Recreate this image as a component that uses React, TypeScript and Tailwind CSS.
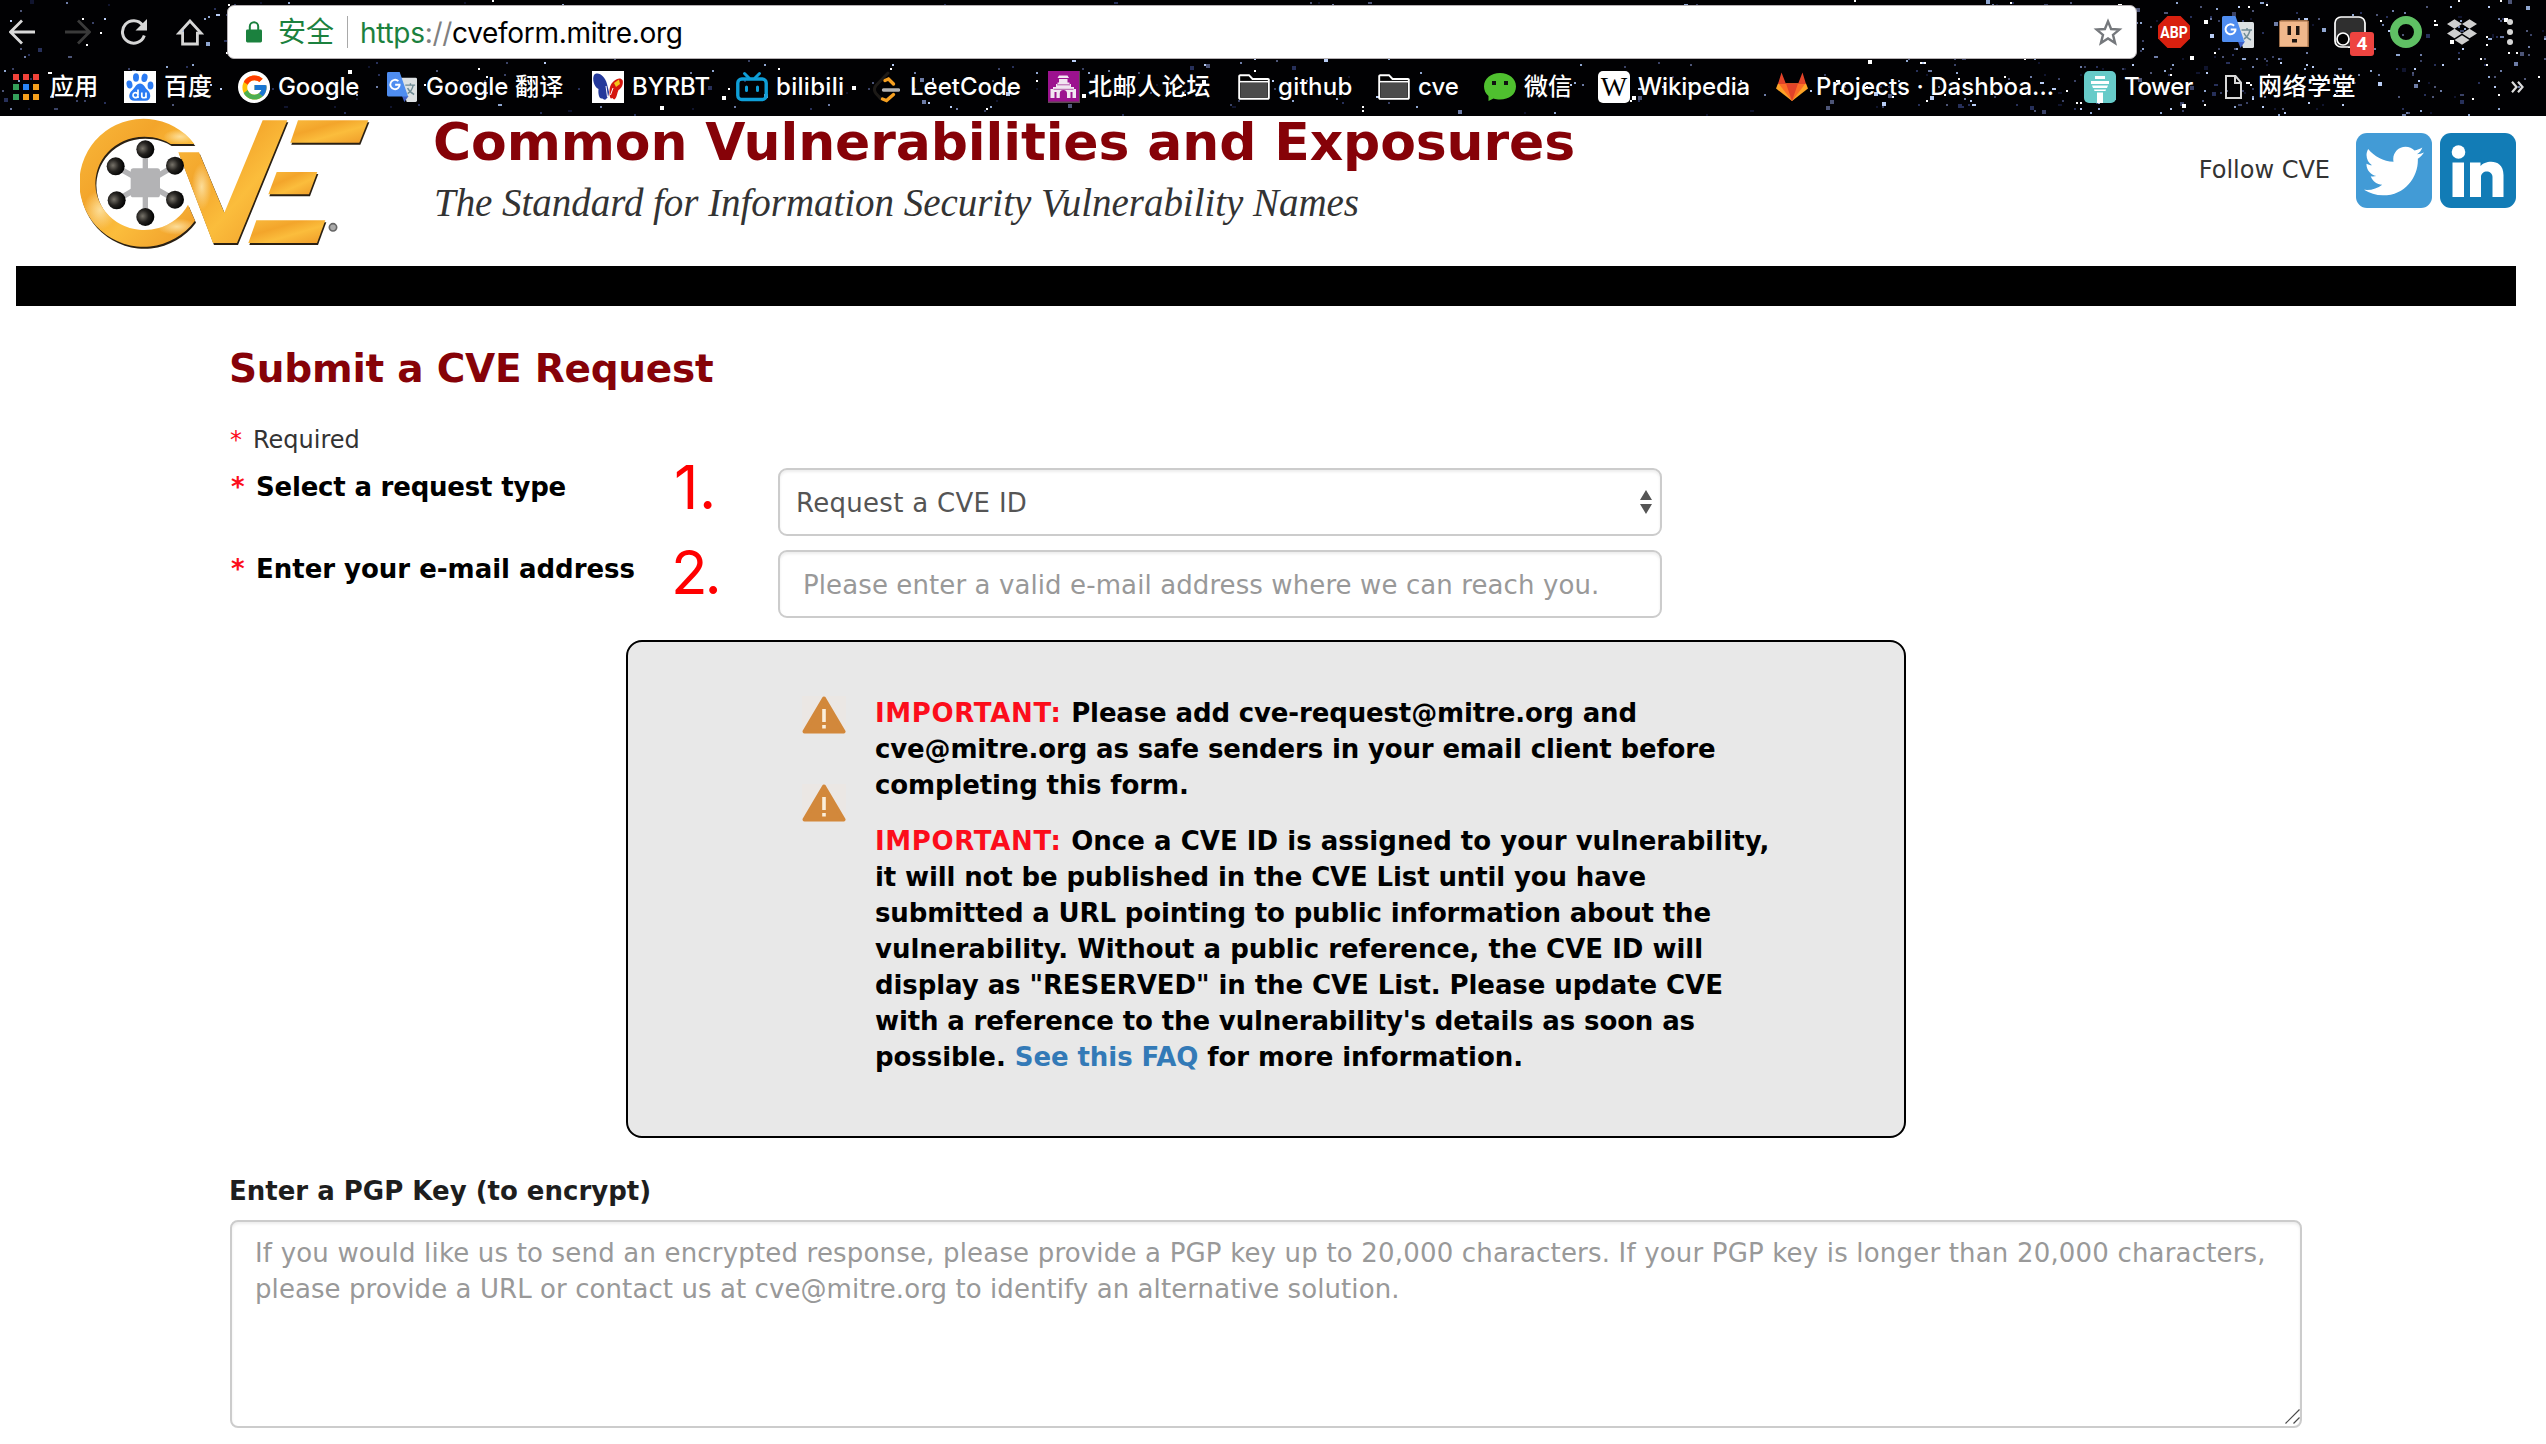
import type { ReactNode } from "react";
import { FcGoogle } from "react-icons/fc";
import { FaTwitter } from "react-icons/fa";
import { SiDropbox } from "react-icons/si";

/* ---------- starry toolbar theme ---------- */

const STAR_COLORS = ["#27305a", "#4d5577", "#6d7ca6", "#8fa6d0", "#b9cdf5", "#ffffff", "#10142e", "#3a4266"];

function makeStars() {
  let seed = 20177;
  const rnd = () => {
    seed = (seed * 1103515245 + 12345) % 2147483648;
    return seed / 2147483648;
  };
  const stars: { x: number; y: number; w: number; h: number; c: string }[] = [];
  for (let i = 0; i < 780; i++) {
    const x = i < 520 ? rnd() * 2546 : 1880 + rnd() * 666;
    const big = rnd() > 0.82;
    stars.push({
      x: Math.round(x / 2) * 2,
      y: Math.round((rnd() * 114) / 2) * 2,
      w: big ? 4 : 2,
      h: big && rnd() > 0.4 ? 4 : 2,
      c: STAR_COLORS[Math.floor(rnd() * STAR_COLORS.length)],
    });
  }
  return stars;
}
const STARS = makeStars();

function StarField() {
  return (
    <svg className="absolute inset-0" width="2546" height="116" shapeRendering="crispEdges" aria-hidden>
      {STARS.map((s, i) => (
        <rect key={i} x={s.x} y={s.y} width={s.w} height={s.h} fill={s.c} />
      ))}
    </svg>
  );
}

/* ---------- browser icons ---------- */

function Arrow({ className, flip }: { className: string; flip?: boolean }) {
  return (
    <svg className={className} width="26" height="26" viewBox="0 0 26 26" fill="none" stroke="currentColor" strokeWidth="2.8">
      {flip ? <path d="M0 13H24M13 1.5L24.5 13L13 24.5" /> : <path d="M26 13H2M13 1.5L1.5 13L13 24.5" />}
    </svg>
  );
}

function Reload() {
  return (
    <svg width="28" height="26" viewBox="0 0 28 26" fill="none" className="text-[#d6d6d6]">
      <path d="M22.6 6.2A11.2 11.2 0 1 0 24.3 16.5" stroke="currentColor" strokeWidth="3" />
      <path d="M27 0V11.5H15.5Z" fill="currentColor" />
    </svg>
  );
}

function Home() {
  return (
    <svg width="28" height="27" viewBox="0 0 28 27" fill="none" stroke="#d6d6d6" strokeWidth="2.8">
      <path d="M14 2L2.8 14.2H6.6V25H21.4V14.2H25.2Z" />
    </svg>
  );
}

function Lock() {
  return (
    <svg width="16" height="22" viewBox="0 0 16 22">
      <path d="M3.8 10V5.4a4.2 4.2 0 0 1 8.4 0V10" fill="none" stroke="#1b813e" strokeWidth="2" />
      <rect x="0" y="8.5" width="16" height="13" rx="1.4" fill="#1b813e" />
    </svg>
  );
}

function StarOutline() {
  return (
    <svg width="30" height="28" viewBox="0 0 30 28" fill="none" stroke="#75787c" strokeWidth="2.4">
      <path d="M15 3.4L18.1 11L26.4 11.6L20 16.9L22.1 25L15 20.5L7.9 25L10 16.9L3.6 11.6L11.9 11Z" />
    </svg>
  );
}

function TranslateIcon({ size }: { size: number }) {
  return (
    <svg width={size} height="32" viewBox="0 0 32 32">
      <path d="M13 6H30.5A1.5 1.5 0 0 1 32 7.500V30.500A1.500 1.500 0 0 1 30.500 32H21Z" fill="#dde1e3" />
      <path d="M16 25.500H23L18.500 32Z" fill="#3f5fc4" />
      <path d="M1.500 0H13.500L22.500 26H1.500A1.500 1.500 0 0 1 0 24.500V1.500A1.500 1.500 0 0 1 1.500 0Z" fill="#4f8df0" />
      <path d="M14 11.600A5 5 0 1 1 12.600 8.800M14 12.600H9.200" fill="none" stroke="#fff" strokeWidth="2" transform="translate(-.5 1)" />
      <path d="M19.500 14H30M25 12V14M28 14C27 18.500 24.500 21.500 22 23M22 17C23.500 20.500 26 22.500 29 24" fill="none" stroke="#6f8b95" strokeWidth="1.500" />
    </svg>
  );
}

function AppsIcon() {
  const colors = ["#f0433a", "#f0433a", "#f0433a", "#34a05a", "#2a84f5", "#f5a01d", "#34a05a", "#f5a01d", "#f5a01d"];
  return (
    <div className="grid grid-cols-3 gap-x-1 gap-y-1">
      {colors.map((c, i) => (
        <svg key={i} width="6" height="6">
          <rect width="6" height="6" fill={c} />
        </svg>
      ))}
    </div>
  );
}

function BaiduIcon() {
  return (
    <svg width="32" height="32" viewBox="0 0 32 32">
      <rect width="32" height="32" fill="#fff" />
      <g fill="#2b7bf3">
        <ellipse cx="12" cy="6.500" rx="3" ry="4.200" />
        <ellipse cx="20.500" cy="6.800" rx="3" ry="4.200" transform="rotate(12 20.500 6.800)" />
        <ellipse cx="5.500" cy="13.500" rx="2.900" ry="4" transform="rotate(-14 5.500 13.500)" />
        <ellipse cx="26.500" cy="14.500" rx="2.900" ry="4" />
        <path d="M16 12.500C20 12.500 20.500 16.500 23.500 19C27.500 22.500 27.500 29.500 21.500 29.800C18 30 14 29.400 11 29.800C4.500 30.200 3.500 23.500 8 19.500C11 17 12 12.500 16 12.500Z" />
      </g>
      <path d="M14 18.500V27M14 24.300A2.500 2.500 0 1 1 14 24.100M17.800 21.500V25C17.800 27.300 22 27.300 22 25V21.500V27.200" fill="none" stroke="#fff" strokeWidth="1.700" />
    </svg>
  );
}

function GoogleIcon() {
  return (
    <div className="flex size-8 items-center justify-center rounded-full bg-white">
      <FcGoogle size={29} />
    </div>
  );
}

function ByrbtIcon() {
  return (
    <svg width="32" height="32" viewBox="0 0 32 32">
      <rect width="32" height="32" fill="#fff" />
      <path d="M2 4C6 0 13 5 15 13L17 21C17 24 16 27 13.500 28.500C12 29.500 11 27 10 27.500C7 28 6 23 6.500 18C2 16 0 8 2 4Z" fill="#24399b" />
      <path d="M18 16C20 9 28 5 30.500 9C32 13 29 18 26.500 19C25 22 25 26 23 28C21 29.500 21 26 19.500 27.500C17.500 28.500 17 20 18 16Z" fill="#d5160f" />
      <path d="M22 12L27 8.500L28 13L24 16Z" fill="#f2c21b" />
      <path d="M14 15L15.500 26M21 17L18.500 24" stroke="#fff" strokeWidth="1" />
    </svg>
  );
}

function BilibiliIcon() {
  return (
    <svg width="32" height="32" viewBox="0 0 32 32" fill="none" stroke="#0f9fd8" strokeLinecap="round">
      <rect x="1.800" y="8" width="28.400" height="20.500" rx="4" strokeWidth="3.400" />
      <path d="M8.500 2.500L13 7M23.500 2.500L19 7" strokeWidth="3" />
      <path d="M10.500 16V19.500M21.500 16V19.500" strokeWidth="3" />
    </svg>
  );
}

function LeetCodeIcon() {
  return (
    <svg width="27" height="32" viewBox="0 0 27 32" fill="none" strokeLinecap="round">
      <path d="M15 2L3 14.500C1 17 1 20 3 22.500L8 28" stroke="#1d1a17" strokeWidth="3" />
      <path d="M12 9.500L15.500 8L20.500 13" stroke="#f6a021" strokeWidth="3.400" />
      <path d="M9.500 28L13.500 29.500L20.500 23.500" stroke="#f6a021" strokeWidth="3.400" />
      <path d="M10.500 19H25.500" stroke="#b3b3b3" strokeWidth="3.400" />
    </svg>
  );
}

function GateIcon() {
  return (
    <svg width="32" height="32" viewBox="0 0 32 32">
      <rect width="32" height="32" fill="#5d4a52" />
      <rect width="31" height="30.500" fill="#9c128f" />
      <path d="M11 4.500H19.500L21 7H9.500ZM11 8H19.500V11.500H21.500V13H23V16H26V18H28V27H24.500V21H22.500V27H19V22.500A3.600 3.600 0 0 0 11.800 22.500V27H8.500V21H6.500V27H2.500V18H5V16H8V13H9.500V11.500H11Z" fill="#f1e6f1" />
      <path d="M9 13.800H22M5.500 18.300H25.500" stroke="#b55cab" strokeWidth="1" />
    </svg>
  );
}

function FolderIcon() {
  return (
    <svg width="32" height="26" viewBox="0 0 32 26">
      <path d="M1.200 24V2A1 1 0 0 1 2.200 1.200H11L14.500 5H30A.8.8 0 0 1 30.800 5.800V24A.8.8 0 0 1 30 24.800H2A.8.8 0 0 1 1.200 24Z" fill="#000" stroke="#fff" strokeWidth="1.900" />
      <rect x="2.500" y="8.500" width="27" height="15" fill="#4b4b4b" />
      <path d="M1.500 7.700H30.500" stroke="#fff" strokeWidth="1.600" />
    </svg>
  );
}

function WechatIcon() {
  return (
    <svg width="32" height="32" viewBox="0 0 32 32">
      <path d="M16 2C25 2 32 7.500 32 15.500C32 23.500 25 28.500 16 28.500C13.500 28.500 11.500 28.200 9.500 27.500L4.500 30V25C1.500 22.500 0 19 0 15.500C0 7.500 7 2 16 2Z" fill="#4fc02f" />
      <rect x="8" y="10" width="4" height="4" fill="#111" />
      <rect x="20" y="10" width="4" height="4" fill="#111" />
    </svg>
  );
}

function WikiIcon() {
  return (
    <div className="flex size-8 items-center justify-center rounded-[5px] bg-white font-['Liberation_Serif',serif] text-[28px] leading-8 text-black">
      W
    </div>
  );
}

function GitlabIcon() {
  return (
    <svg width="32" height="30" viewBox="0 0 32 30">
      <path d="M16 29L0 16.500L2 11.500H30L32 16.500Z" fill="#fca326" />
      <path d="M16 29L2.500 11.500H29.500Z" fill="#fc6d26" />
      <path d="M16 29L10 11.500H22Z" fill="#e24329" />
      <path d="M2 12L5.500 .5L10 12ZM30 12L26.500 .5L22 12Z" fill="#e24329" />
    </svg>
  );
}

function TowerIcon() {
  return (
    <svg width="32" height="32" viewBox="0 0 32 32">
      <rect width="32" height="32" rx="5" fill="#67cbc9" />
      <path d="M11 5H21V8H11ZM7 10H25V13H7ZM8 14.500H24L23 17H9ZM10 18.500H22L21.500 20H10.500ZM13 21.500H19V32H13Z" fill="#fff" />
    </svg>
  );
}

function FileIcon() {
  return (
    <svg width="17" height="24" viewBox="0 0 17 24" fill="none" stroke="#d8d8d8" strokeWidth="2">
      <path d="M1 1H10.500L16 7.500V23H1ZM10 1V8H16" />
    </svg>
  );
}

const BOOKMARKS: { width: string; icon: ReactNode; label: string; text: string }[] = [
  { width: "w-[111px]", icon: <AppsIcon />, label: "应用", text: "ml-[11px] tracking-[0.3px]" },
  { width: "w-[114px]", icon: <BaiduIcon />, label: "百度", text: "ml-2" },
  { width: "w-[149px]", icon: <GoogleIcon />, label: "Google", text: "ml-2 tracking-[-0.1px]" },
  { width: "w-[205px]", icon: <TranslateIcon size={30} />, label: "Google 翻译", text: "ml-[9px] tracking-[0.1px]" },
  { width: "w-[144px]", icon: <ByrbtIcon />, label: "BYRBT", text: "ml-2" },
  { width: "w-[137px]", icon: <BilibiliIcon />, label: "bilibili", text: "ml-2 tracking-[0.3px]" },
  { width: "w-[175px]", icon: <LeetCodeIcon />, label: "LeetCode", text: "ml-[10px]" },
  { width: "w-[190px]", icon: <GateIcon />, label: "北邮人论坛", text: "ml-2 tracking-[0.6px]" },
  { width: "w-[140px]", icon: <FolderIcon />, label: "github", text: "ml-2 tracking-[0.3px]" },
  { width: "w-[106px]", icon: <FolderIcon />, label: "cve", text: "ml-2" },
  { width: "w-[114px]", icon: <WechatIcon />, label: "微信", text: "ml-2" },
  { width: "w-[178px]", icon: <WikiIcon />, label: "Wikipedia", text: "ml-2 tracking-[-0.1px]" },
  { width: "w-[308px]", icon: <GitlabIcon />, label: "Projects · Dashboa...", text: "ml-2 tracking-[0.05px]" },
  { width: "w-[141px]", icon: <TowerIcon />, label: "Tower", text: "ml-2 tracking-[-0.4px]" },
  { width: "w-[286px]", icon: <FileIcon />, label: "网络学堂", text: "ml-4 tracking-[0.6px]" },
];

function Extensions() {
  return (
    <div className="flex h-[54px] items-center">
      <svg className="ml-[21px]" width="32" height="32" viewBox="0 0 32 32">
        <path d="M9.500 0H22.500L32 9.500V22.500L22.500 32H9.500L0 22.500V9.500Z" fill="#d8200f" />
        <text x="16" y="21.500" textAnchor="middle" fontFamily="Roboto" fontWeight="700" fontSize="16" fill="#fff" textLength="27.500" lengthAdjust="spacingAndGlyphs">
          ABP
        </text>
      </svg>
      <div className="ml-8">
        <TranslateIcon size={32} />
      </div>
      <svg className="mt-[3px] ml-[25px]" width="30" height="28" viewBox="0 0 30 28">
        <path d="M0 1L2 0H28L30 1V27H0Z" fill="#9c6b45" />
        <rect x="1" y="1.500" width="27.500" height="25" fill="#f0b88c" />
        <path d="M8.500 6H12V15H8.500ZM17 6H20.500V15H17ZM13 19H18V22.500H13Z" fill="#1c1410" />
      </svg>
      <div className="relative ml-[25px]">
        <svg width="32" height="32" viewBox="0 0 32 32">
          <rect x="1" y="1" width="30" height="30" rx="6" fill="#2f2f2f" stroke="#fff" strokeWidth="1.700" />
          <circle cx="9" cy="23" r="6" fill="#000" stroke="#fff" strokeWidth="1.700" />
        </svg>
        <div className="absolute top-4 left-4 flex h-6 w-6 items-center justify-center rounded-[3px] bg-[#ee4440] font-['Roboto',sans-serif] text-[19px] leading-6 font-bold text-white">
          4
        </div>
      </div>
      <svg className="ml-6" width="32" height="32" viewBox="0 0 32 32">
        <circle cx="16" cy="16" r="12" fill="none" stroke="#5fc064" strokeWidth="8" />
      </svg>
      <SiDropbox className="ml-[25px]" size={30} color="#cfcfcf" />
      <svg className="ml-[30px]" width="6" height="26" viewBox="0 0 6 26" fill="#d6d6d6">
        <circle cx="3" cy="3" r="3" />
        <circle cx="3" cy="13" r="3" />
        <circle cx="3" cy="23" r="3" />
      </svg>
    </div>
  );
}

function BrowserChrome() {
  return (
    <div className="relative h-[116px] overflow-hidden bg-[#010103] font-['Inter','Noto_Sans_CJK_SC',sans-serif]">
      <StarField />
      <div className="relative flex pt-[5px]">
        <div className="flex h-[54px] w-[227px] shrink-0 items-center pl-[9px]">
          <Arrow className="text-[#d9d9d9]" />
          <Arrow className="ml-[30px] text-[#3a3a3a]" flip />
          <div className="ml-[29px]">
            <Reload />
          </div>
          <div className="ml-7">
            <Home />
          </div>
        </div>
        <div className="flex h-[54px] w-[1910px] shrink-0 items-center rounded-[7px] border border-[#b5b0b3] bg-white pr-[13px] pl-[18px] text-[28px]">
          <Lock />
          <span className="ml-4 leading-[52px] whitespace-nowrap text-[#1b813e]">安全</span>
          <div className="ml-[13px] h-8 w-px bg-[#a9a9a9]" />
          <div className="ml-3 flex-1 pt-px leading-[52px] tracking-[-0.3px] text-black">
            <span className="text-[#1b813e]">https</span>
            <span className="text-[#808080]">://</span>cveform.mitre.org
          </div>
          <StarOutline />
        </div>
        <Extensions />
      </div>
      <div className="relative mt-3 flex h-8 pl-[13px] text-[24px] leading-8 font-medium text-white">
        {BOOKMARKS.map((b) => (
          <div key={b.label} className={`flex shrink-0 items-center ${b.width}`}>
            <div className="shrink-0">{b.icon}</div>
            <span className={`h-8 whitespace-nowrap ${b.text}`}>{b.label}</span>
          </div>
        ))}
        <svg className="mt-[10px]" width="13" height="12" viewBox="0 0 13 12" fill="none" stroke="#dcdcdc" strokeWidth="2.200">
          <path d="M1 .8L5.500 6L1 11.200M7 .8L11.500 6L7 11.200" />
        </svg>
      </div>
    </div>
  );
}

/* ---------- page header ---------- */

const BALLS = [
  [436, 148],
  [347, 199],
  [525, 197],
  [350, 301],
  [525, 299],
  [436, 351],
];

function LogoShapes() {
  return (
    <>
      <path d="M583 132A192 192 0 1 0 585 362L564 314A147 140 0 1 1 512 132Z" />
      <path d="M535 157H597L673 338L788 61H862L711 429H639Z" />
      <path d="M894 61H1105L1078 128H871Z" />
      <path d="M830 216H952L927 283H805Z" />
      <path d="M769 361H976L951 429H745Z" />
    </>
  );
}

function CveLogo() {
  return (
    <svg width="294" height="134" viewBox="240 48 882 402">
      <defs>
        <linearGradient id="gold" x1="0" y1="0" x2="1" y2="1">
          <stop offset="0" stopColor="#f9b93c" />
          <stop offset=".35" stopColor="#f3a52b" />
          <stop offset=".6" stopColor="#fbbd3c" />
          <stop offset="1" stopColor="#ee9a28" />
        </linearGradient>
        <radialGradient id="ball" cx=".35" cy=".45" r=".6">
          <stop offset="0" stopColor="#77736a" />
          <stop offset=".55" stopColor="#24221f" />
          <stop offset="1" stopColor="#050505" />
        </radialGradient>
        <radialGradient id="shine">
          <stop offset="0" stopColor="#fde3a4" stopOpacity=".9" />
          <stop offset="1" stopColor="#fde3a4" stopOpacity="0" />
        </radialGradient>
        <clipPath id="logoClip">
          <LogoShapes />
        </clipPath>
      </defs>
      <g fill="#2a2013" transform="translate(3 6)">
        <LogoShapes />
      </g>
      <g fill="url(#gold)">
        <LogoShapes />
      </g>
      <g clipPath="url(#logoClip)" fill="url(#shine)">
        <ellipse cx="300" cy="330" rx="50" ry="60" />
        <ellipse cx="605" cy="260" rx="30" ry="70" />
        <ellipse cx="530" cy="380" rx="60" ry="25" />
        <ellipse cx="540" cy="110" rx="50" ry="22" />
      </g>
      <g stroke="#b3b3b5" strokeWidth="16">
        <path d="M436 148V351M347 199L525 299M525 197L350 301" />
      </g>
      <rect x="392" y="205" width="88" height="87" rx="8" fill="#b3b3b5" />
      {BALLS.map(([x, y]) => (
        <circle key={`${x}-${y}`} cx={x} cy={y} r="27" fill="url(#ball)" />
      ))}
      <circle cx="999" cy="382" r="11" fill="#aaa" stroke="#666" strokeWidth="5" />
    </svg>
  );
}

function PageHeader() {
  return (
    <header className="flex h-[150px] pr-[30px] pl-20">
      <div className="w-[352px] shrink-0">
        <CveLogo />
      </div>
      <div className="flex-1 pt-[6px]">
        <h1 className="ml-px text-[52px] leading-10 font-bold tracking-[-0.12px] whitespace-nowrap text-[#860208]">
          Common Vulnerabilities and Exposures
        </h1>
        <p className="mt-[18px] ml-[2px] font-['Liberation_Serif',serif] text-[39px] leading-[46px] tracking-[-0.04px] whitespace-nowrap text-[#333] italic">
          The Standard for Information Security Vulnerability Names
        </p>
      </div>
      <div className="flex pt-[17px]">
        <span className="mt-[19px] text-[24px] leading-9 whitespace-nowrap text-[#333]">Follow CVE</span>
        <div className="ml-[26px] flex h-[75px] w-[76px] items-center justify-center rounded-[11px] bg-[#429bd6]">
          <FaTwitter size={60} color="#fff" />
        </div>
        <svg className="ml-2" width="76" height="75" viewBox="0 0 76 75">
          <rect width="76" height="75" rx="11" fill="#127cb6" />
          <circle cx="18.500" cy="19" r="6.800" fill="#fff" />
          <path d="M12.500 29.500H24V64H12.500ZM30 29.500H40.500V33C45 27 63.500 25 63.500 42V64H52.500V44C52.500 36.500 41 36.500 41 44V64H30Z" fill="#fff" />
        </svg>
      </div>
    </header>
  );
}

/* ---------- form ---------- */

function FieldRow({ label, step, tracking, stepClass, children }: { label: string; step: string; tracking: string; stepClass: string; children: ReactNode }) {
  return (
    <div className="flex h-[68px]">
      <div className="flex w-[442px] shrink-0 pt-px pl-px text-[26px] leading-9 font-bold text-black">
        <span className="w-[25px] text-[#fc0d1b]">*</span>
        <span className={`whitespace-nowrap ${tracking}`}>{label}</span>
      </div>
      <div className={`shrink-0 font-['Inter',sans-serif] text-[60px] leading-[60px] text-[#ff0000] ${stepClass}`}>{step}</div>
      {children}
    </div>
  );
}

function Warning() {
  return (
    <svg width="44" height="38" viewBox="0 0 44 38">
      <rect width="44" height="38" fill="#ebe7e4" />
      <path d="M22 2.500L41.500 35.500H2.500Z" fill="#d2883b" stroke="#d2883b" strokeWidth="4" strokeLinejoin="round" />
      <path d="M22 13V26M22 29V32.500" stroke="#fbeeda" strokeWidth="3.600" />
    </svg>
  );
}

const NOTICE_ONE = [
  { text: "Please add cve-request@mitre.org and", tracking: "tracking-[-0.14px]", important: true },
  { text: "cve@mitre.org as safe senders in your email client before", tracking: "tracking-[-0.15px]" },
  { text: "completing this form.", tracking: "tracking-[-0.13px]" },
];

const NOTICE_TWO = [
  { text: "Once a CVE ID is assigned to your vulnerability,", tracking: "tracking-[0.03px]", important: true },
  { text: "it will not be published in the CVE List until you have", tracking: "tracking-[-0.13px]" },
  { text: "submitted a URL pointing to public information about the", tracking: "tracking-[-0.15px]" },
  { text: "vulnerability. Without a public reference, the CVE ID will", tracking: "tracking-[0px]" },
  { text: 'display as "RESERVED" in the CVE List. Please update CVE', tracking: "tracking-[-0.08px]" },
  { text: "with a reference to the vulnerability's details as soon as", tracking: "tracking-[-0.13px]" },
];

function NoticeLine({ text, tracking, important }: { text: string; tracking: string; important?: boolean }) {
  return (
    <div className={`whitespace-nowrap ${tracking}`}>
      {important && <span className="tracking-[0.66px] text-[#fc0d1b]">IMPORTANT: </span>}
      {text}
    </div>
  );
}

function Notice() {
  return (
    <div className="mt-[22px] ml-[396px] flex h-[498px] w-[1280px] rounded-[16px] border-2 border-black bg-[#e8e8e8]">
      <div className="flex w-[247px] shrink-0 flex-col gap-[50px] pt-[54px] pl-[174px]">
        <Warning />
        <Warning />
      </div>
      <div className="pt-[53px] text-[26px] leading-9 font-bold text-black">
        {NOTICE_ONE.map((l) => (
          <NoticeLine key={l.text} {...l} />
        ))}
        <div className="mt-5">
          {NOTICE_TWO.map((l) => (
            <NoticeLine key={l.text} {...l} />
          ))}
          <div className="tracking-[-0.07px] whitespace-nowrap">
            possible. <a className="text-[#337ab7]">See this FAQ</a> for more information.
          </div>
        </div>
      </div>
    </div>
  );
}

export default function App() {
  return (
    <div className="h-[1444px] w-[2546px] overflow-hidden bg-white font-['DejaVu_Sans',sans-serif]">
      <BrowserChrome />
      <PageHeader />
      <div className="mr-[30px] ml-4 h-10 bg-black" />
      <main className="pl-[230px]">
        <h2 className="-ml-px pt-[41px] text-[39px] leading-[44px] font-bold tracking-[-0.25px] text-[#860208]">Submit a CVE Request</h2>
        <div className="mt-[31px] flex text-[24px] leading-9 text-[#333]">
          <span className="w-[23px] text-[#fc0d1b]">*</span>
          <span>Required</span>
        </div>
        <div className="mt-[10px] flex flex-col gap-[14px]">
          <FieldRow label="Select a request type" step="1." tracking="tracking-[-0.2px]" stepClass="-mt-[11px] w-[104px] ml-[2px] tracking-[0.5px]">
            <div className="flex h-[68px] w-[884px] items-center justify-between rounded-[9px] border-2 border-[#ccc] bg-white pr-2 pl-4 text-[26px] leading-9 tracking-[0.3px] text-[#555] shadow-[inset_0_2px_3px_rgba(0,0,0,0.075)]">
              <span className="pt-px">Request a CVE ID</span>
              <svg width="12" height="24" viewBox="0 0 12 24" fill="#555">
                <path d="M6 0L12 10H0ZM6 24L12 14H0Z" />
              </svg>
            </div>
          </FieldRow>
          <FieldRow label="Enter your e-mail address" step="2." tracking="tracking-[-0.02px]" stepClass="-mt-2 w-[107px] -ml-px tracking-[-3px]">
            <div className="flex h-[68px] w-[884px] items-center rounded-[9px] border-2 border-[#ccc] bg-white px-[23px] text-[26px] leading-9 tracking-[0.1px] text-[#999] shadow-[inset_0_2px_3px_rgba(0,0,0,0.075)]">
              <span className="pt-px whitespace-nowrap">Please enter a valid e-mail address where we can reach you.</span>
            </div>
          </FieldRow>
        </div>
        <Notice />
        <div className="mt-[35px] -ml-px text-[26px] leading-9 font-bold text-[#1e1e1e]">Enter a PGP Key (to encrypt)</div>
        <div className="relative mt-[11px] h-[208px] w-[2072px] rounded-[8px] border-2 border-[#ccc] bg-white px-[23px] pt-[13px] text-[26px] leading-9 whitespace-nowrap text-[#999] shadow-[inset_0_2px_3px_rgba(0,0,0,0.075)]">
          <div className="tracking-[0.18px]">
            If you would like us to send an encrypted response, please provide a PGP key up to 20,000 characters. If your PGP key is longer than 20,000 characters,
          </div>
          <div className="tracking-[0.08px]">please provide a URL or contact us at cve@mitre.org to identify an alternative solution.</div>
          <svg className="absolute right-0 bottom-[2px]" width="15" height="15" viewBox="0 0 15 15" stroke="#4a4a4a" strokeWidth="1.200">
            <path d="M.5 14.500L14.500 .5M8.500 14.500L14.500 8.500" />
          </svg>
        </div>
      </main>
    </div>
  );
}
